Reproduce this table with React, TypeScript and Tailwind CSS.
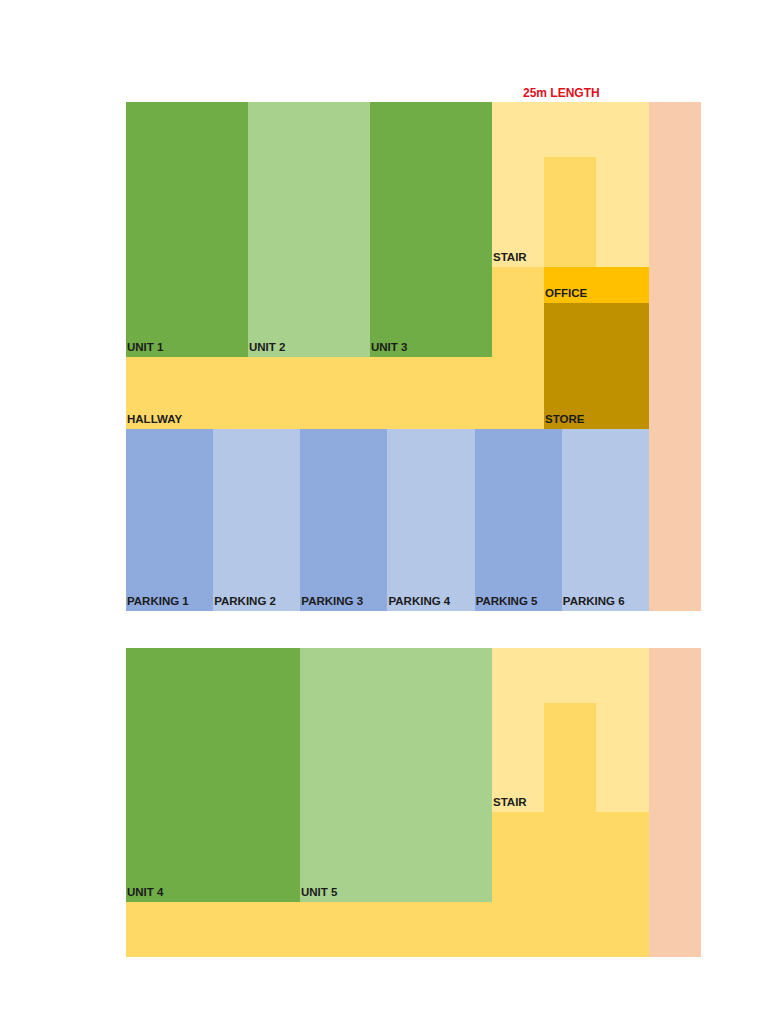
type CellProps = {
  label?: string;
  className?: string;
};

// spreadsheet-style block, label sits bottom-left like an Excel cell
function Cell({ label, className = "" }: CellProps) {
  return (
    <div className={`flex items-end ${className}`}>
      {label && (
        <span className="pb-[3px] pl-[1px] text-[11.5px] leading-[13px] font-bold whitespace-nowrap text-[#1b1b1b]">
          {label}
        </span>
      )}
    </div>
  );
}

function Stair({ height }: { height: string }) {
  return (
    <div className={`flex bg-[#FFE699] ${height}`}>
      <Cell label="STAIR" className="w-[52px]" />
      <div className="flex w-[52px] flex-col">
        <div className="h-[55px]" />
        <div className="flex-1 bg-[#FFD966]" />
      </div>
    </div>
  );
}

const parking = ["PARKING 1", "PARKING 2", "PARKING 3", "PARKING 4", "PARKING 5", "PARKING 6"];

export default function App() {
  return (
    <div
      className="min-h-screen bg-white pt-[85px] pl-[126px]"
      style={{ fontFamily: '"Liberation Sans", Arial, sans-serif' }}
    >
      {/* title */}
      <div className="flex h-[17px] w-[575px]">
        <span className="ml-[397px] text-[12px] leading-[17px] font-bold text-[#e0101e]">
          25m LENGTH
        </span>
      </div>

      {/* first floor */}
      <div className="flex h-[509px] w-[575px]">
        <div className="flex w-[523px] flex-col">
          <div className="flex h-[327px]">
            <div className="flex w-[366px] flex-col">
              <div className="flex h-[255px]">
                <Cell label="UNIT 1" className="w-[122px] bg-[#70AD47]" />
                <Cell label="UNIT 2" className="w-[122px] bg-[#A9D18E]" />
                <Cell label="UNIT 3" className="w-[122px] bg-[#70AD47]" />
              </div>
              <Cell label="HALLWAY" className="flex-1 bg-[#FFD966]" />
            </div>
            <div className="flex w-[157px] flex-col">
              <Stair height="h-[165px]" />
              <div className="flex flex-1">
                <div className="w-[52px] bg-[#FFD966]" />
                <div className="flex flex-1 flex-col">
                  <Cell label="OFFICE" className="h-[36px] bg-[#FFC000]" />
                  <Cell label="STORE" className="flex-1 bg-[#BF9000]" />
                </div>
              </div>
            </div>
          </div>
          <div className="grid flex-1 grid-cols-6">
            {parking.map((p, i) => (
              <Cell key={p} label={p} className={i % 2 === 0 ? "bg-[#8FAADC]" : "bg-[#B4C7E7]"} />
            ))}
          </div>
        </div>
        <div className="w-[52px] bg-[#F8CBAD]" />
      </div>

      {/* second floor */}
      <div className="mt-[37px] flex h-[309px] w-[575px]">
        <div className="flex w-[523px] flex-col">
          <div className="flex h-[254px]">
            <Cell label="UNIT 4" className="w-[174px] bg-[#70AD47]" />
            <Cell label="UNIT 5" className="w-[192px] bg-[#A9D18E]" />
            <div className="flex w-[157px] flex-col bg-[#FFD966]">
              <Stair height="h-[164px]" />
            </div>
          </div>
          <div className="flex-1 bg-[#FFD966]" />
        </div>
        <div className="w-[52px] bg-[#F8CBAD]" />
      </div>
    </div>
  );
}
